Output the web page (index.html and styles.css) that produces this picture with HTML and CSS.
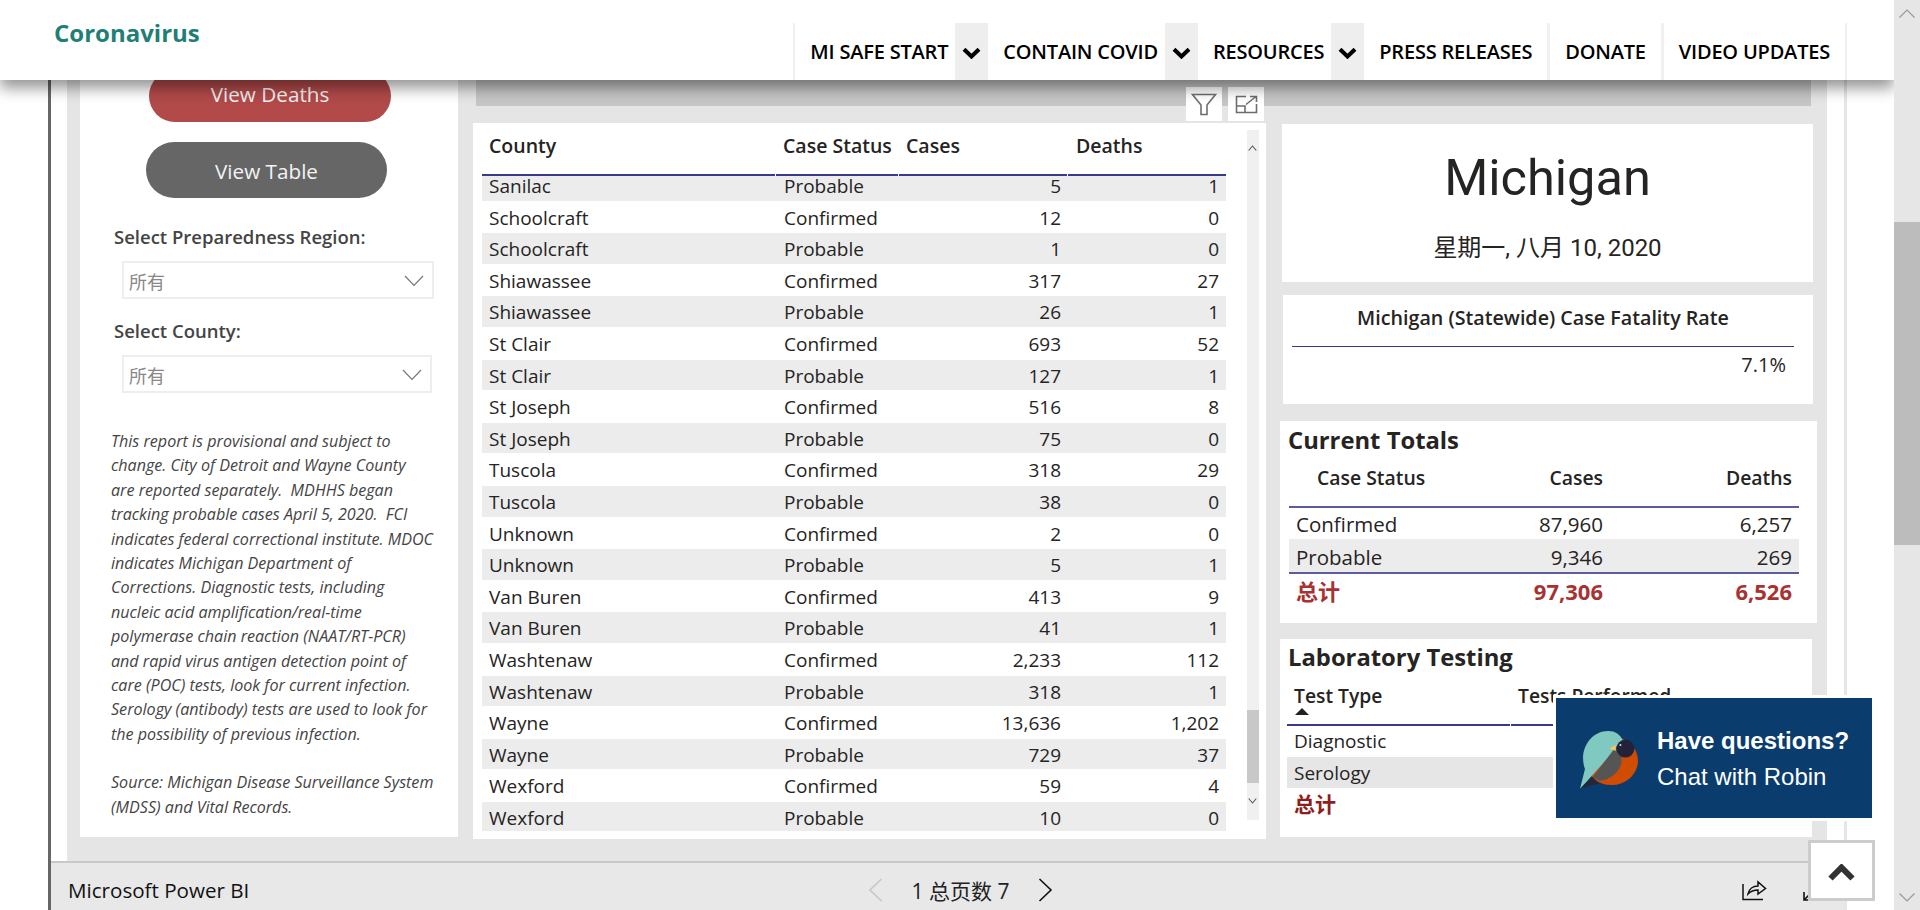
FILE: index.html
```html
<!DOCTYPE html>
<html lang="en">
<head>
    <meta charset="UTF-8">
    <meta name="viewport" content="width=device-width, initial-scale=1.0">
    <title>Coronavirus - Michigan Data</title>
    <link rel="stylesheet" href="styles.css">
</head>
<body>
<div class="page">
    <div class="main">
        <header class="site-header">
            <div class="site-title">Coronavirus</div>
            <nav class="site-nav">
                <a class="nav-item has-toggle">MI SAFE START</a>
                <span class="nav-toggle"><svg width="19" height="12" viewBox="0 0 19 12"><path d="M2 2.2l7.5 7.3 7.5-7.3" fill="none" stroke="#000" stroke-width="4"/></svg></span>
                <a class="nav-item has-toggle plain">CONTAIN COVID</a>
                <span class="nav-toggle"><svg width="19" height="12" viewBox="0 0 19 12"><path d="M2 2.2l7.5 7.3 7.5-7.3" fill="none" stroke="#000" stroke-width="4"/></svg></span>
                <a class="nav-item has-toggle plain">RESOURCES</a>
                <span class="nav-toggle"><svg width="19" height="12" viewBox="0 0 19 12"><path d="M2 2.2l7.5 7.3 7.5-7.3" fill="none" stroke="#000" stroke-width="4"/></svg></span>
                <a class="nav-item plain press">PRESS RELEASES</a>
                <a class="nav-item donate">DONATE</a>
                <a class="nav-item video">VIDEO UPDATES</a>
            </nav>
        </header>

        <div class="report">
            <div class="canvas-wrap">
                <div class="canvas">
                    <aside class="filters">
                        <div class="pill pill-deaths">View Deaths</div>
                        <div class="pill pill-table">View Table</div>

                        <div class="slicer-label first">Select Preparedness Region:</div>
                        <div class="slicer">
                            <span>所有</span>
                            <svg width="20" height="12" viewBox="0 0 20 12"><path d="M1 1l9 9.5L19 1" fill="none" stroke="#777" stroke-width="1.2"/></svg>
                        </div>
                        <div class="slicer-label">Select County:</div>
                        <div class="slicer short">
                            <span>所有</span>
                            <svg width="20" height="12" viewBox="0 0 20 12"><path d="M1 1l9 9.5L19 1" fill="none" stroke="#777" stroke-width="1.2"/></svg>
                        </div>

                        <p class="note">This report is provisional and subject to<br>change. City of Detroit and Wayne County<br>are reported separately.&nbsp; MDHHS began<br>tracking probable cases April 5, 2020.&nbsp; FCI<br>indicates federal correctional institute. MDOC<br>indicates Michigan Department of<br>Corrections. Diagnostic tests, including<br>nucleic acid amplification/real-time<br>polymerase chain reaction (NAAT/RT-PCR)<br>and rapid virus antigen detection point of<br>care (POC) tests, look for current infection.<br>Serology (antibody) tests are used to look for<br>the possibility of previous infection.</p>
                        <p class="note source">Source: Michigan Disease Surveillance System<br>(MDSS) and Vital Records.</p>
                    </aside>

                    <div class="visuals">
                        <div class="strip"></div>
                        <div class="visual-row">
                            <section class="county-card">
                                <div class="toolbar">
                                    <span class="tool"><svg width="26" height="23" viewBox="0 0 26 23"><path d="M1.5 1.5h23L16 12v9.5h-6V12z" fill="none" stroke="#6e6e6e" stroke-width="1.6"/></svg></span>
                                    <span class="tool"><svg width="23" height="19" viewBox="0 0 23 19"><path d="M11 1.5H1.5v16h20V9M1.5 11H10v6.5M11 9.5L21 1.5M15 1.5h6.5V7" fill="none" stroke="#6e6e6e" stroke-width="1.6"/></svg></span>
                                </div>
                                <div class="county-table">
                                    <div class="county-head">
                                        <div>County</div>
                                        <div>Case Status</div>
                                        <div>Cases</div>
                                        <div>Deaths</div>
                                    </div>
                                    <div class="county-body">
                                        <div class="row alt first"><span>Sanilac</span><span>Probable</span><span class="num">5</span><span class="num">1</span></div>
                                        <div class="row"><span>Schoolcraft</span><span>Confirmed</span><span class="num">12</span><span class="num">0</span></div>
                                        <div class="row alt"><span>Schoolcraft</span><span>Probable</span><span class="num">1</span><span class="num">0</span></div>
                                        <div class="row"><span>Shiawassee</span><span>Confirmed</span><span class="num">317</span><span class="num">27</span></div>
                                        <div class="row alt"><span>Shiawassee</span><span>Probable</span><span class="num">26</span><span class="num">1</span></div>
                                        <div class="row"><span>St Clair</span><span>Confirmed</span><span class="num">693</span><span class="num">52</span></div>
                                        <div class="row alt"><span>St Clair</span><span>Probable</span><span class="num">127</span><span class="num">1</span></div>
                                        <div class="row"><span>St Joseph</span><span>Confirmed</span><span class="num">516</span><span class="num">8</span></div>
                                        <div class="row alt"><span>St Joseph</span><span>Probable</span><span class="num">75</span><span class="num">0</span></div>
                                        <div class="row"><span>Tuscola</span><span>Confirmed</span><span class="num">318</span><span class="num">29</span></div>
                                        <div class="row alt"><span>Tuscola</span><span>Probable</span><span class="num">38</span><span class="num">0</span></div>
                                        <div class="row"><span>Unknown</span><span>Confirmed</span><span class="num">2</span><span class="num">0</span></div>
                                        <div class="row alt"><span>Unknown</span><span>Probable</span><span class="num">5</span><span class="num">1</span></div>
                                        <div class="row"><span>Van Buren</span><span>Confirmed</span><span class="num">413</span><span class="num">9</span></div>
                                        <div class="row alt"><span>Van Buren</span><span>Probable</span><span class="num">41</span><span class="num">1</span></div>
                                        <div class="row"><span>Washtenaw</span><span>Confirmed</span><span class="num">2,233</span><span class="num">112</span></div>
                                        <div class="row alt"><span>Washtenaw</span><span>Probable</span><span class="num">318</span><span class="num">1</span></div>
                                        <div class="row"><span>Wayne</span><span>Confirmed</span><span class="num">13,636</span><span class="num">1,202</span></div>
                                        <div class="row alt"><span>Wayne</span><span>Probable</span><span class="num">729</span><span class="num">37</span></div>
                                        <div class="row"><span>Wexford</span><span>Confirmed</span><span class="num">59</span><span class="num">4</span></div>
                                        <div class="row alt"><span>Wexford</span><span>Probable</span><span class="num">10</span><span class="num">0</span></div>
                                    </div>
                                </div>
                                <div class="table-scroll">
                                    <svg class="scroll-up" width="9" height="6" viewBox="0 0 9 6"><path d="M.7 5.5L4.5 1l3.8 4.5" fill="none" stroke="#555" stroke-width="1.1"/></svg>
                                    <div class="table-thumb"></div>
                                    <svg class="scroll-down" width="9" height="6" viewBox="0 0 9 6"><path d="M.7.5L4.5 5 8.3.5" fill="none" stroke="#555" stroke-width="1.1"/></svg>
                                </div>
                            </section>

                            <div class="side">
                                <section class="card state-card">
                                    <div class="state-name">Michigan</div>
                                    <div class="state-date">星期一, 八月 10, 2020</div>
                                </section>
                                <section class="card rate-card">
                                    <div class="rate-title">Michigan (Statewide) Case Fatality Rate</div>
                                    <div class="rate-value">7.1%</div>
                                </section>
                                <section class="card totals-card">
                                    <h2>Current Totals</h2>
                                    <div class="totals-head">
                                        <div class="status-head">Case Status</div>
                                        <div class="num">Cases</div>
                                        <div class="num">Deaths</div>
                                    </div>
                                    <div class="totals-row"><span>Confirmed</span><span class="num">87,960</span><span class="num">6,257</span></div>
                                    <div class="totals-row alt"><span>Probable</span><span class="num">9,346</span><span class="num">269</span></div>
                                    <div class="totals-row total"><span>总计</span><span class="num">97,306</span><span class="num">6,526</span></div>
                                </section>
                                <section class="card lab-card">
                                    <h2>Laboratory Testing</h2>
                                    <div class="lab-head">
                                        <div class="lab-type">Test Type<i class="sort-arrow"></i></div>
                                        <div>Tests Performed</div>
                                    </div>
                                    <div class="lab-row">Diagnostic</div>
                                    <div class="lab-row alt">Serology</div>
                                    <div class="lab-row total">总计</div>
                                </section>
                            </div>
                        </div>
                    </div>
                </div>
            </div>

            <footer class="pbi-bar">
                <div class="pbi-name">Microsoft Power BI</div>
                <div class="pager">
                    <svg width="15" height="24" viewBox="0 0 15 24"><path d="M13.5 1L2 12l11.5 11" fill="none" stroke="#c6c6c6" stroke-width="1.6"/></svg>
                    <span class="pager-text">1 总页数 7</span>
                    <svg width="15" height="24" viewBox="0 0 15 24"><path d="M1.5 1L13 12 1.5 23" fill="none" stroke="#111" stroke-width="1.6"/></svg>
                </div>
                <div class="pbi-tools">
                    <svg width="25" height="22" viewBox="0 0 25 22"><path d="M1 5v15.5h20M6 15c1-5 5-8 10-8V3l7.500 6.500L16 15v-4c-4 0-7 1-10 4z" fill="none" stroke="#111" stroke-width="1.5"/></svg>
                    <svg class="expand-corner" width="9" height="10" viewBox="0 0 9 10"><path d="M1 1v8h7M1.500 8.500L8 2" fill="none" stroke="#111" stroke-width="1.600"/></svg>
                </div>
            </footer>
        </div>
    </div>

    <div class="page-scroll">
        <svg class="page-up" width="16" height="9" viewBox="0 0 16 9"><path d="M.5 8.500L8 1l7.500 7.500" fill="none" stroke="#999" stroke-width="1.200"/></svg>
        <div class="page-thumb"></div>
        <svg class="page-down" width="16" height="9" viewBox="0 0 16 9"><path d="M.5.5L8 8 15.500.5" fill="none" stroke="#999" stroke-width="1.200"/></svg>
    </div>

    <div class="chat">
        <svg width="58" height="58" viewBox="0 0 175 175">
            <ellipse cx="95" cy="90" rx="80" ry="73" fill="#cf4c00"/>
            <path d="M0 175L15 115C-5 60 30 0 85 0c22 0 36 10 45 30z" fill="#7fc9c0"/>
            <path d="M38 140L110 45c12 12 16 30 15 48-3 30-35 55-65 57z" fill="#555"/>
            <path d="M0 175L36 137l22 22c-20 2-40 8-58 16z" fill="#25263a"/>
            <path d="M88 52l20-9v17z" fill="#f3c95c"/>
            <circle cx="137" cy="53" r="27" fill="#22223a"/>
            <circle cx="122" cy="42" r="3" fill="#ddd"/>
        </svg>
        <div class="chat-text">
            <div class="chat-title">Have questions?</div>
            <div class="chat-sub">Chat with Robin</div>
        </div>
    </div>

    <div class="back-top">
        <svg width="27" height="17" viewBox="0 0 27 17"><path d="M2.500 14.500l11-11 11 11" fill="none" stroke="#333" stroke-width="6"/></svg>
    </div>
</div>
</body>
</html>
```

FILE: styles.css
```css
* {
    box-sizing: border-box;
}

body {
    margin: 0;
    background: #fff;
    color: #252423;
    font-family: "Open Sans", "Noto Sans CJK SC", sans-serif;
    overflow: hidden;
}

.page {
    position: relative;
    display: flex;
    width: 1920px;
    height: 910px;
    overflow: hidden;
}

.main {
    flex: 1;
    display: flex;
    flex-direction: column;
    min-width: 0;
}

/* site header */
.site-header {
    position: relative;
    z-index: 5;
    flex: none;
    display: flex;
    justify-content: space-between;
    align-items: flex-start;
    height: 80px;
    background: #fff;
    box-shadow: 0 8px 14px rgba(0, 0, 0, 0.42);
}

.site-title {
    margin: 17px 0 0 54px;
    color: #1f7f75;
    font-size: 24px;
    font-weight: 700;
    line-height: 32px;
}

.site-nav {
    display: flex;
    height: 57px;
    margin: 23px 47px 0 0;
    border-right: 2px solid #f0f0f0;
    color: #000;
    font-size: 20px;
    font-weight: 600;
    white-space: nowrap;
}

.nav-item {
    display: flex;
    align-items: center;
    height: 57px;
    padding: 0 15px;
    border-left: 2px solid #f0f0f0;
    letter-spacing: -0.2px;
}

.nav-item.has-toggle {
    padding-right: 7px;
}

.nav-item.plain {
    border-left: 0;
}

.nav-item.donate,
.nav-item.video {
    border-left-width: 3px;
}

.nav-toggle {
    display: flex;
    justify-content: center;
    padding-top: 24px;
    width: 33px;
    background: #eee;
}

/* report frame */
.report {
    flex: 1;
    display: flex;
    flex-direction: column;
    width: 1799px;
    min-height: 0;
    margin-left: 48px;
    border-left: 3px solid #666;
    border-right: 3px solid #e6e6e6;
}

.canvas-wrap {
    flex: 1;
    min-height: 0;
    padding: 0 17px 0 16px;
}

.canvas {
    display: flex;
    height: 100%;
    padding-left: 13px;
    background: #e5e5e5;
}

/* left column */
.filters {
    flex: none;
    width: 378px;
    height: 757px;
    background: #fff;
}

.pill {
    display: flex;
    align-items: center;
    justify-content: center;
    color: #f3f3f3;
    font-size: 20.7px;
    border-radius: 26px;
}

.pill-deaths {
    width: 242px;
    height: 52px;
    margin: -10px 0 0 69px;
    padding-bottom: 4px;
    background: #b24a4a;
}

.pill-table {
    width: 241px;
    height: 56px;
    margin: 20px 0 0 66px;
    padding-top: 1px;
    background: #666;
    border-radius: 28px;
}

.slicer-label {
    margin: 20px 0 0 34px;
    color: #444;
    font-size: 18.5px;
    font-weight: 600;
    line-height: 24px;
}

.slicer-label.first {
    margin-top: 27px;
}

.slicer {
    display: flex;
    align-items: center;
    justify-content: space-between;
    width: 312px;
    height: 38px;
    margin: 12px 0 0 42px;
    padding: 2px 8px 0 5px;
    border: 2px solid #eee;
    color: #888;
    font-size: 18px;
}

.slicer.short {
    width: 310px;
}

.note {
    margin: 36px 0 0 31px;
    color: #444;
    font-size: 16.1px;
    font-style: italic;
    line-height: 24.4px;
    white-space: nowrap;
}

.note.source {
    margin-top: 24px;
}

/* middle and right */
.visuals {
    flex: 1;
    min-width: 0;
    margin-left: 15px;
    padding-right: 10px;
}

.strip {
    height: 26px;
    margin: 0 6px 0 3px;
    background: #c6c6c6;
}

.visual-row {
    display: flex;
    margin-top: 17px;
}

.county-card {
    position: relative;
    flex: none;
    width: 793px;
    height: 716px;
    background: #fff;
}

.toolbar {
    position: absolute;
    top: -36px;
    right: 2px;
    display: flex;
    gap: 6px;
}

.tool {
    display: flex;
    align-items: center;
    justify-content: center;
    width: 36px;
    height: 34px;
    background: #fff;
}

.county-table {
    width: 744px;
    margin-left: 9px;
}

.county-head {
    display: grid;
    grid-template-columns: 293px 122px 168px 158px;
    column-gap: 1px;
    height: 53px;
    font-size: 19.5px;
    font-weight: 600;
    line-height: 46px;
}

.county-head div {
    padding-left: 7px;
    border-bottom: 2px solid #3a3a8c;
    white-space: nowrap;
}

.county-head div:last-child {
    padding-left: 8px;
}

.row {
    display: grid;
    grid-template-columns: 294px 123px 169px 158px;
    height: 31.6px;
    font-size: 19px;
    line-height: 33px;
    box-shadow: inset 0 -1px 0 #fff;
}

.row.first {
    height: 25.6px;
    line-height: 20px;
}

.row:last-child {
    height: 30px;
}

.row.alt {
    background: #ececec;
}

.num {
    text-align: right;
}

.row span {
    padding-left: 7px;
}

.row span:nth-child(2) {
    padding-left: 8px;
}

.row .num {
    padding-right: 7px;
}

.table-scroll {
    position: absolute;
    top: 7px;
    left: 774px;
    width: 12px;
    height: 690px;
    background: #f0f0f0;
}

.table-thumb {
    position: absolute;
    top: 580px;
    left: 0;
    width: 100%;
    height: 73px;
    background: #c8c8c8;
}

.scroll-up,
.scroll-down {
    position: absolute;
    left: 1px;
}

.scroll-up {
    top: 15px;
}

.scroll-down {
    top: 668px;
}

.side {
    flex: none;
    width: 537px;
    margin-left: 14px;
}

.card {
    background: #fff;
}

.card h2 {
    margin: 0;
    font-size: 23.8px;
    font-weight: 700;
}

.state-card {
    height: 158px;
    margin: 1px 4px 0 2px;
    text-align: center;
}

.state-name {
    padding-top: 21px;
    font-family: Roboto, sans-serif;
    font-size: 50.5px;
    line-height: 66px;
}

.state-date {
    margin-top: 22px;
    font-family: Roboto, "Noto Sans CJK SC", sans-serif;
    font-size: 24px;
    line-height: 30px;
}

.rate-card {
    height: 109px;
    margin: 13px 4px 0 3px;
    padding: 0 20px 0 9px;
}

.rate-title {
    height: 52px;
    margin-right: -1px;
    border-bottom: 1px solid #3a3a8c;
    font-size: 19.7px;
    font-weight: 600;
    line-height: 46px;
    text-align: center;
    white-space: nowrap;
}

.rate-value {
    padding-right: 7px;
    font-size: 20px;
    line-height: 36px;
    text-align: right;
}

.totals-card {
    height: 202px;
    margin-top: 17px;
    padding: 0 18px 0 9px;
}

.totals-card h2 {
    margin-left: -1px;
    line-height: 38px;
}

.totals-head {
    display: grid;
    grid-template-columns: 142px 180px 188px;
    height: 49px;
    border-bottom: 2px solid #5c5c9c;
    font-size: 19.4px;
    font-weight: 600;
    line-height: 38px;
}

.status-head {
    padding-left: 28px;
}

.totals-head .num,
.totals-row .num {
    padding-right: 7px;
}

.totals-head .num:nth-child(2),
.totals-row .num:nth-child(2) {
    padding-right: 8px;
}

.totals-row {
    display: grid;
    grid-template-columns: 142px 180px 188px;
    height: 31px;
    font-size: 20.5px;
    line-height: 33px;
}

.totals-row span:first-child {
    padding-left: 7px;
}

.totals-row.alt {
    height: 35px;
    background: #ececec;
    border-bottom: 2px solid #5c5c9c;
    line-height: 37px;
}

.totals-row.total {
    color: #a83232;
    font-size: 22px;
    font-weight: 700;
    line-height: 35px;
}

.lab-card {
    position: relative;
    height: 198px;
    margin: 16px 5px 0 0;
    padding-left: 7px;
}

.lab-card h2 {
    margin-left: 1px;
    line-height: 36px;
}

.lab-head {
    display: grid;
    grid-template-columns: 223px 1fr;
    column-gap: 1px;
    height: 51px;
    font-size: 19.3px;
    font-weight: 600;
    line-height: 42px;
}

.lab-head div {
    position: relative;
    padding-left: 7px;
    border-bottom: 2px solid #3a3a8c;
    white-space: nowrap;
}

.sort-arrow {
    position: absolute;
    left: 8px;
    top: 33px;
    border-left: 7px solid transparent;
    border-right: 7px solid transparent;
    border-bottom: 7px solid #222;
}

.lab-row {
    height: 31px;
    padding-left: 7px;
    font-size: 19px;
    line-height: 30px;
}

.lab-row.alt {
    background: #e6e6e6;
    line-height: 32px;
}

.lab-row.total {
    color: #8e1e1e;
    font-size: 21px;
    font-weight: 700;
    line-height: 32px;
}

/* footer bar */
.pbi-bar {
    flex: none;
    display: flex;
    align-items: center;
    height: 49px;
    padding: 7px 0 0 17px;
    background: #e8e8e8;
    border-top: 2px solid #c8c8c8;
}

.pbi-name {
    flex: none;
    width: 800px;
    color: #111;
    font-size: 20.6px;
}

.pager {
    display: flex;
    align-items: center;
}

.pager-text {
    width: 155px;
    color: #222;
    font-size: 21px;
    text-align: center;
}

.pbi-tools {
    display: flex;
    align-items: flex-end;
    gap: 36px;
    margin-left: 689px;
}

/* page scrollbar */
.page-scroll {
    position: relative;
    z-index: 6;
    flex: none;
    width: 26px;
    background: #e6e6e6;
}

.page-thumb {
    position: absolute;
    top: 222px;
    left: 0;
    width: 100%;
    height: 323px;
    background: #bcbcbc;
}

.page-up,
.page-down {
    position: absolute;
    left: 5px;
}

.page-up {
    top: 9px;
}

.page-down {
    top: 893px;
}

/* floating widgets */
.chat {
    position: absolute;
    z-index: 7;
    right: 45px;
    bottom: 89px;
    display: flex;
    align-items: center;
    gap: 19px;
    width: 322px;
    height: 126px;
    padding-left: 24px;
    background: #0a3c6e;
    border: 3px solid #fff;
    color: #fff;
    font-family: "Liberation Sans", Arial, sans-serif;
}

.chat svg {
    flex: none;
    margin-top: 3px;
}

.chat-text {
    padding-top: 2px;
}

.chat-title {
    font-size: 24px;
    font-weight: 700;
    line-height: 30px;
}

.chat-sub {
    margin-top: 6px;
    font-size: 24px;
    line-height: 30px;
}

.back-top {
    position: absolute;
    z-index: 7;
    right: 45px;
    bottom: 9px;
    display: flex;
    align-items: center;
    justify-content: center;
    width: 67px;
    height: 61px;
    padding-top: 4px;
    background: #fff;
    border: 3px solid #ccc;
}
```
